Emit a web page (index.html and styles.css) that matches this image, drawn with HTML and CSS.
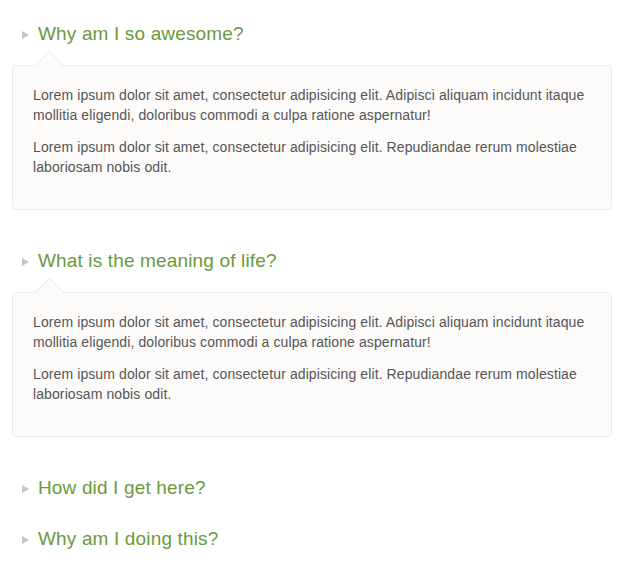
FILE: index.html
```html
<!DOCTYPE html>
<html>
<head>
<meta charset="utf-8">
<link rel="stylesheet" href="styles.css">
</head>
<body>
<div class="faq">
  <div class="item open">
    <h3 class="q"><span class="tri"></span>Why am I so awesome?</h3>
    <div class="a">
      <p>Lorem ipsum dolor sit amet, consectetur adipisicing elit. Adipisci aliquam incidunt itaque mollitia eligendi, doloribus commodi a culpa ratione aspernatur!</p>
      <p>Lorem ipsum dolor sit amet, consectetur adipisicing elit. Repudiandae rerum molestiae laboriosam nobis odit.</p>
    </div>
  </div>
  <div class="item open">
    <h3 class="q"><span class="tri"></span>What is the meaning of life?</h3>
    <div class="a">
      <p>Lorem ipsum dolor sit amet, consectetur adipisicing elit. Adipisci aliquam incidunt itaque mollitia eligendi, doloribus commodi a culpa ratione aspernatur!</p>
      <p>Lorem ipsum dolor sit amet, consectetur adipisicing elit. Repudiandae rerum molestiae laboriosam nobis odit.</p>
    </div>
  </div>
  <div class="item">
    <h3 class="q"><span class="tri"></span>How did I get here?</h3>
  </div>
  <div class="item">
    <h3 class="q"><span class="tri"></span>Why am I doing this?</h3>
  </div>
</div>
</body>
</html>
```
FILE: styles.css
```css
html, body {
  margin: 0;
  padding: 0;
  background: #fff;
}
.faq {
  padding: 23px 0 0 12px;
  width: 600px;
  font-family: "Liberation Sans", Arial, sans-serif;
}
.item {
  margin-bottom: 29px;
}
.item.open {
  margin-bottom: 40px;
}
.q {
  margin: 0;
  font-size: 19px;
  line-height: 22px;
  letter-spacing: 0.15px;
  font-weight: normal;
  color: #6a9a3b;
  display: flex;
  align-items: center;
  padding-left: 10px;
}
.tri {
  width: 0;
  height: 0;
  border-top: 4px solid transparent;
  border-bottom: 4px solid transparent;
  border-left: 7px solid #c4c4c4;
  margin-right: 9px;
  margin-top: 2px;
}
.a {
  position: relative;
  margin-top: 20px;
  background: #fcfbfa;
  border: 1px solid #ebebeb;
  border-radius: 4px;
  padding: 19px 20px 20px;
  color: #555;
  font-size: 14px;
  line-height: 20px;
  letter-spacing: 0.1px;
}
.a::before {
  content: "";
  position: absolute;
  left: 26px;
  top: -11px;
  width: 20px;
  height: 20px;
  background: #fcfbfa;
  border-left: 1px solid #ebebeb;
  border-top: 1px solid #ebebeb;
  transform: rotate(45deg);
}
.a p {
  margin: 0 0 12px;
  position: relative;
}
```
